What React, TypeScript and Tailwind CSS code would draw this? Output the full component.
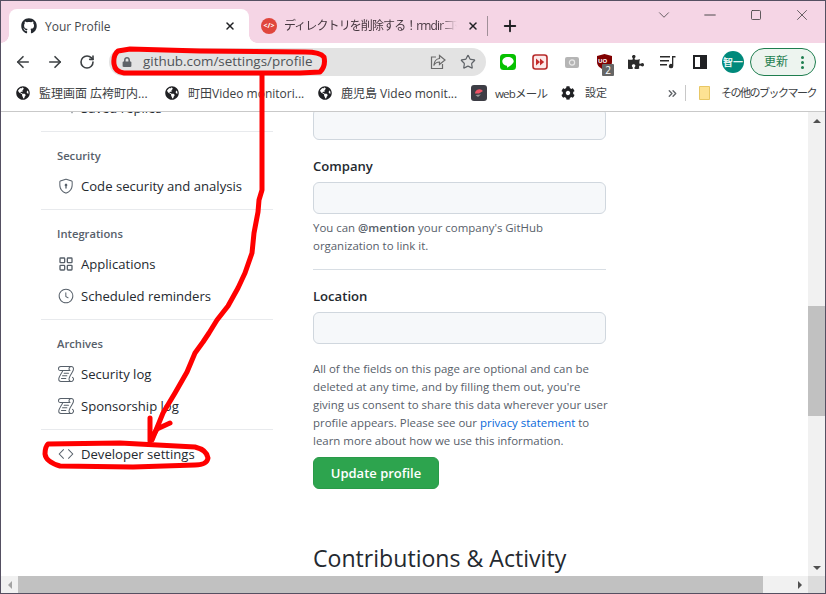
import { ArrowLeft, ArrowRight, RotateCw, Star, X, Plus, ChevronDown, Minus, Square, ChevronsRight, LayoutGrid } from 'lucide-react'
import { GoShieldLock, GoClock, GoLog, GoCode, GoReply } from 'react-icons/go'
import { FaGithub, FaGlobeAmericas, FaLock, FaCog, FaPuzzlePiece } from 'react-icons/fa'

// Red pen marks drawn over the screenshot
const Annotations = () => (
  <svg className="absolute left-[-1px] top-[-1px] pointer-events-none" width="826" height="594" fill="none" stroke="#ff0000" strokeWidth="5" strokeLinejoin="round" strokeLinecap="round">
    <path d="M130 49 L118 51 Q113 55 114 64 Q115 72 124 73 L300 73 L320 72 Q326 66 324 57 Q320 52 305 52 L200 51 Z" />
    <path d="M262 75 L262 190 L259 200 L258 212 L254 233 L252 253 L245 273 L238 288 L228 306 L217 320 L209 333 L203 342 L195 353 L187 372 L175 393 L163 413 L152 440" />
    <path d="M150 418 L150 441 L157 429 L170 423" />
    <path d="M48 444 L120 443 L195 447 Q207 450 208 458 Q207 465 195 465 L133 467 L60 466 Q46 462 45 454 Q45 447 48 444 Z" />
  </svg>
)

const ShareIcon = () => (
  <svg width="16" height="16" viewBox="0 0 16 16" fill="none" stroke="#6b6b6b" strokeWidth="1.2">
    <path d="M6 3H1.5v11.5h11V10" />
    <path d="M9.5 1.5 15 6l-5.5 4.5V8C7 8 5 9 3.8 11.5 4.2 7.5 6.5 4.8 9.5 4.5Z" />
  </svg>
)

const LineIcon = () => (
  <svg width="16" height="16" viewBox="0 0 16 16">
    <rect width="16" height="16" rx="3.5" fill="#06c100" />
    <path d="M8 3C4.7 3 2.3 5 2.3 7.4c0 2.2 1.9 4 4.5 4.4.5.1.3.8.2 1.4 0 .3.2.3.5.2 1.8-1 5.4-3.300 6-5.200.1-.3.2-.5.2-.8C13.700 5 11.300 3 8 3Z" fill="#fff" />
  </svg>
)

const ForwardIcon = () => (
  <svg width="16" height="16" viewBox="0 0 16 16">
    <rect x="1" y="1" width="14" height="14" rx="2.500" fill="#fdeaea" stroke="#b72a2a" strokeWidth="1.600" />
    <path d="M4 4.500 8 8l-4 3.500ZM8 4.500 12.200 8 8 11.500Z" fill="#c52b2b" />
  </svg>
)

const CameraIcon = () => (
  <svg width="14" height="11" viewBox="0 0 14 11">
    <rect width="14" height="11" rx="2" fill="#b5b5b5" />
    <circle cx="7" cy="5.500" r="2.600" fill="none" stroke="#e8e8e8" strokeWidth="1.200" />
  </svg>
)

const QueueIcon = () => (
  <svg width="16" height="14" viewBox="0 0 16 14" fill="#2b2b2b">
    <path d="M0 1h10v1.400H0ZM0 5h9v1.400H0ZM0 9h7v1.400H0Z" />
    <path d="M12 1h3.500v1.600H13.300V11a2.200 2.200 0 1 1-1.300-2Z" />
  </svg>
)

const Globe = () => <FaGlobeAmericas className="w-[14px] h-[14px] text-[#202124] shrink-0" />

const Bookmark = ({ icon, label, className, labelClass }: any) => (
  <div className={`flex items-center shrink-0 ${className}`}>
    {icon}
    <span className={`mt-px whitespace-nowrap text-[#3c4043] ${labelClass}`}>{label}</span>
  </div>
)

const SideItem = ({ icon: Icon, label }: any) => (
  <div className="h-8 flex items-center pl-[17px] gap-[7px] text-[13.1px] text-[#24292f]">
    <Icon className="w-4 h-4 text-[#57606a] shrink-0" />
    <span className="mt-[2px] whitespace-nowrap">{label}</span>
  </div>
)

const SideSection = ({ title, children }: any) => (
  <div className="border-t border-[#e8eaed] pb-[7px]">
    <div className="h-[38px] pt-[10px] pl-4 flex items-center text-[11.2px] font-semibold text-[#57606a]">{title}</div>
    {children}
  </div>
)

const TextField = () => <div className="h-8 rounded-md border border-[#d0d7de] bg-[#f6f8fa]" />

export default function App() {
  return (
    <div className="relative w-[826px] h-[594px] overflow-hidden border border-[#555062] bg-white font-['Open_Sans','Noto_Sans_CJK_JP',sans-serif] text-[#24292f]">
      {/* Tab strip */}
      <div className="h-[42px] bg-[#f5d5e5] flex items-end">
        <div className="relative ml-2 w-[240px] h-[34px] bg-white rounded-t-lg flex items-center pl-3 pr-[13px]">
          <span className="absolute bottom-0 -left-2 w-2 h-2 bg-[radial-gradient(circle_at_0_0,#f5d5e5_7.5px,#fff_8px)]" />
          <span className="absolute bottom-0 -right-2 w-2 h-2 bg-[radial-gradient(circle_at_100%_0,#f5d5e5_7.5px,#fff_8px)]" />
          <FaGithub className="w-4 h-4 text-[#24292f]" />
          <span className="ml-2 mt-px text-xs text-[#45484d] flex-1 whitespace-nowrap">Your Profile</span>
          <X className="w-3 h-3 text-[#202124]" strokeWidth={3} />
        </div>
        <div className="ml-[10px] w-[228px] h-[34px] flex items-center pl-[2px]">
          <span className="w-4 h-4 rounded-full bg-[#e0463c] text-white text-[7px] font-bold flex items-center justify-center shrink-0">&lt;/&gt;</span>
          <span className="ml-[7px] w-[173px] overflow-hidden whitespace-nowrap text-xs tracking-[-0.9px] text-[#45373f] [mask-image:linear-gradient(to_right,#000_90%,transparent)]">ディレクトリを削除する！rmdir<span className="tracking-[-3px]">コマンド</span></span>
          <X className="ml-[10px] w-3 h-3 text-[#202124]" strokeWidth={3} />
        </div>
        <div className="mb-[7px] w-px h-5 bg-[#a08f98]" />
        <Plus className="ml-[13px] mb-[8px] w-[18px] h-[18px] text-[#202124]" strokeWidth={2.500} />
        <div className="ml-auto self-start flex items-center h-[28px] text-[#3a3a3a]">
          <div className="w-[46px] flex justify-center"><ChevronDown className="w-[18px] h-[18px]" strokeWidth={1} /></div>
          <div className="w-[46px] flex justify-center"><Minus className="w-[18px] h-[18px]" strokeWidth={1.200} /></div>
          <div className="w-[46px] flex justify-center"><Square className="w-[12px] h-[12px]" strokeWidth={1.600} /></div>
          <div className="w-[46px] flex justify-center"><X className="w-[18px] h-[18px]" strokeWidth={1} /></div>
        </div>
      </div>

      {/* Toolbar */}
      <div className="h-[38px] flex items-center pl-[6px]">
        <div className="w-8 flex justify-center"><ArrowLeft className="w-[18px] h-[18px] text-[#3c4043]" strokeWidth={2.200} /></div>
        <div className="w-8 flex justify-center"><ArrowRight className="w-[18px] h-[18px] text-[#3c4043]" strokeWidth={2.200} /></div>
        <div className="w-8 flex justify-center"><RotateCw className="w-4 h-4 text-[#3c4043]" strokeWidth={2.400} /></div>
        <div className="ml-[6px] w-[377px] h-[28px] rounded-full bg-[#e3e3e3] flex items-center pl-[13px] pr-1">
          <FaLock className="w-[10px] h-[10px] text-[#5f6368]" />
          <span className="ml-[11px] -mt-px text-[13.4px] text-[#4f5357] whitespace-nowrap flex-1">github.com/settings/profile</span>
          <div className="w-8 flex justify-center"><ShareIcon /></div>
          <div className="w-[28px] flex justify-center"><Star className="w-4 h-4 text-[#5f6368]" strokeWidth={1.800} /></div>
        </div>
        <div className="ml-[6px] w-8 flex justify-center"><LineIcon /></div>
        <div className="w-8 flex justify-center"><ForwardIcon /></div>
        <div className="w-8 flex justify-center"><CameraIcon /></div>
        <div className="relative w-8 flex justify-center">
          <svg width="15" height="16" viewBox="0 0 15 16"><path d="M7.500 0 15 2v6c0 4-3.500 6.500-7.500 8C3.500 14.500 0 12 0 8V2Z" fill="#800000" /></svg>
          <span className="absolute left-[10px] top-[3px] text-[6px] font-bold text-white leading-[8px]">UO</span>
          <span className="absolute left-[14px] top-[10px] w-3 h-3 rounded-[1px] bg-[#666] text-white text-[10px] leading-3 text-center">2</span>
        </div>
        <div className="w-8 flex justify-center"><FaPuzzlePiece className="w-4 h-4 text-[#2b2b2b]" /></div>
        <div className="w-8 flex justify-center"><QueueIcon /></div>
        <div className="w-8 flex justify-center">
          <div className="w-[14px] h-[14px] border-2 border-[#202124] flex justify-end"><div className="w-[5px] bg-[#202124]" /></div>
        </div>
        <div className="w-[34px] flex justify-center">
          <div className="w-[22px] h-[22px] rounded-full bg-[#00897b] text-white/90 text-[10px] font-bold flex items-center justify-center whitespace-nowrap">智一</div>
        </div>
        <div className="w-[66px] h-[28px] rounded-full border border-[#1e7e4f] bg-[#edf4ef] flex items-center pl-[13px]">
          <span className="text-xs text-[#1e7e4f] flex-1 whitespace-nowrap">更新</span>
          <div className="mr-[11px] flex flex-col gap-[2px]">
            <span className="w-[3px] h-[3px] rounded-full bg-[#1e7e4f]" />
            <span className="w-[3px] h-[3px] rounded-full bg-[#1e7e4f]" />
            <span className="w-[3px] h-[3px] rounded-full bg-[#1e7e4f]" />
          </div>
        </div>
      </div>

      {/* Bookmarks bar */}
      <div className="h-[30px] pb-[6px] flex items-center">
        <Bookmark className="ml-[15px]" labelClass="ml-[9px] w-[108px] text-xs" icon={<Globe />} label="監理画面 広袴町内..." />
        <Bookmark className="ml-[18px]" labelClass="ml-[9px] w-[112px] text-xs" icon={<Globe />} label="町田Video monitori..." />
        <Bookmark className="ml-[18px]" labelClass="ml-[9px] w-[114px] text-xs" icon={<Globe />} label="鹿児島 Video monit..." />
        <Bookmark className="ml-[16px]" labelClass="ml-2 w-[48px] text-[11.5px] tracking-[-0.8px]"
          icon={
            <svg width="16" height="16" viewBox="0 0 16 16" className="shrink-0">
              <rect width="16" height="16" rx="3" fill="#3d3d45" />
              <path d="M4 8.500a4.500 4.500 0 0 1 8-2.500L8 8.500Z" fill="#ef5366" />
              <path d="M4.500 10 10 9.500 7 12Z" fill="#999" />
            </svg>
          }
          label="webメール" />
        <Bookmark className="ml-[18px]" labelClass="ml-[10px] w-[22px] text-[11px]" icon={<FaCog className="w-[14px] h-[14px] text-[#202124]" />} label="設定" />
        <ChevronsRight className="ml-[59px] shrink-0 w-[13px] h-[13px] text-[#5f6368]" strokeWidth={2.500} />
        <div className="ml-[6px] shrink-0 w-px h-4 bg-[#c8c8c8]" />
        <Bookmark className="ml-[13px]" labelClass="ml-[11px] text-[11px] tracking-[-1.5px]"
          icon={
            <svg width="11" height="14" viewBox="0 0 11 14" className="shrink-0">
              <path d="M.5.500h10v13H.5Z" fill="#fde293" stroke="#e8c765" />
            </svg>
          }
          label="その他のブックマーク" />
      </div>
      <div className="h-px bg-[#c9c9c9]" />

      {/* Page + scrollbars */}
      <div className="h-[464px] flex">
        <div className="w-[807px] overflow-hidden flex">
          {/* Settings sidebar */}
          <aside className="ml-10 w-[232px] -mt-5 shrink-0">
            <div className="pb-[7px]"><SideItem icon={GoReply} label="Saved replies" /></div>
            <SideSection title="Security">
              <SideItem icon={GoShieldLock} label="Code security and analysis" />
            </SideSection>
            <SideSection title="Integrations">
              <SideItem icon={LayoutGrid} label="Applications" />
              <SideItem icon={GoClock} label="Scheduled reminders" />
            </SideSection>
            <SideSection title="Archives">
              <SideItem icon={GoLog} label="Security log" />
              <SideItem icon={GoLog} label="Sponsorship log" />
            </SideSection>
            <div className="border-t border-[#e8eaed] pt-2">
              <SideItem icon={GoCode} label="Developer settings" />
            </div>
          </aside>

          {/* Profile form */}
          <main className="ml-10 w-[293px] -mt-1 shrink-0">
            <TextField />
            <label className="mt-4 mb-[6px] block h-5 leading-5 text-[13.1px] font-semibold">Company</label>
            <TextField />
            <p className="mt-[5px] text-[11.45px] leading-[18px] text-[#57606a]">
              You can <b className="font-semibold">@mention</b> your company's GitHub<br />organization to link it.
            </p>
            <hr className="mt-[14px] border-0 h-px bg-[#d8dee4]" />
            <label className="mt-4 mb-[6px] block h-5 leading-5 text-[13.1px] font-semibold">Location</label>
            <TextField />
            <p className="mt-4 -mr-[6px] text-[11.45px] leading-[18px] text-[#57606a]">
              All of the fields on this page are optional and can be deleted at any time, and by filling them out, you're giving us consent to share this data wherever your user profile appears. Please see our <span className="text-[#0969da]">privacy statement</span> to learn more about how we use this information.
            </p>
            <button className="mt-[7px] block w-[126px] h-8 pt-px rounded-md bg-[#2da44e] border border-[#2a9a49] text-white text-[13px] font-semibold">Update profile</button>
            <h2 className="mt-[51px] h-9 leading-9 text-[23.1px] whitespace-nowrap">Contributions &amp; Activity</h2>
          </main>
        </div>

        {/* Vertical scrollbar */}
        <div className="w-[17px] bg-[#f1f1f1] flex flex-col items-center">
          <div className="h-[17px] flex items-center justify-center"><div className="border-x-[4px] border-x-transparent border-b-[4px] border-b-[#505050]" /></div>
          <div className="mt-[177px] w-full h-[110px] bg-[#c1c1c1]" />
          <div className="mt-auto h-[17px] flex items-center justify-center"><div className="border-x-[4px] border-x-transparent border-t-[4px] border-t-[#505050]" /></div>
        </div>
      </div>

      {/* Horizontal scrollbar */}
      <div className="h-[17px] bg-[#f1f1f1] flex items-center">
        <div className="w-[17px] flex justify-center"><div className="border-y-[4px] border-y-transparent border-r-[4px] border-r-[#a3a3a3]" /></div>
        <div className="w-[745px] h-full bg-[#c1c1c1]" />
        <div className="w-[45px] flex justify-end pr-[6px]"><div className="border-y-[4px] border-y-transparent border-l-[4px] border-l-[#505050]" /></div>
        <div className="w-[17px] h-full bg-[#dcdcdc]" />
      </div>

      <Annotations />
    </div>
  )
}
